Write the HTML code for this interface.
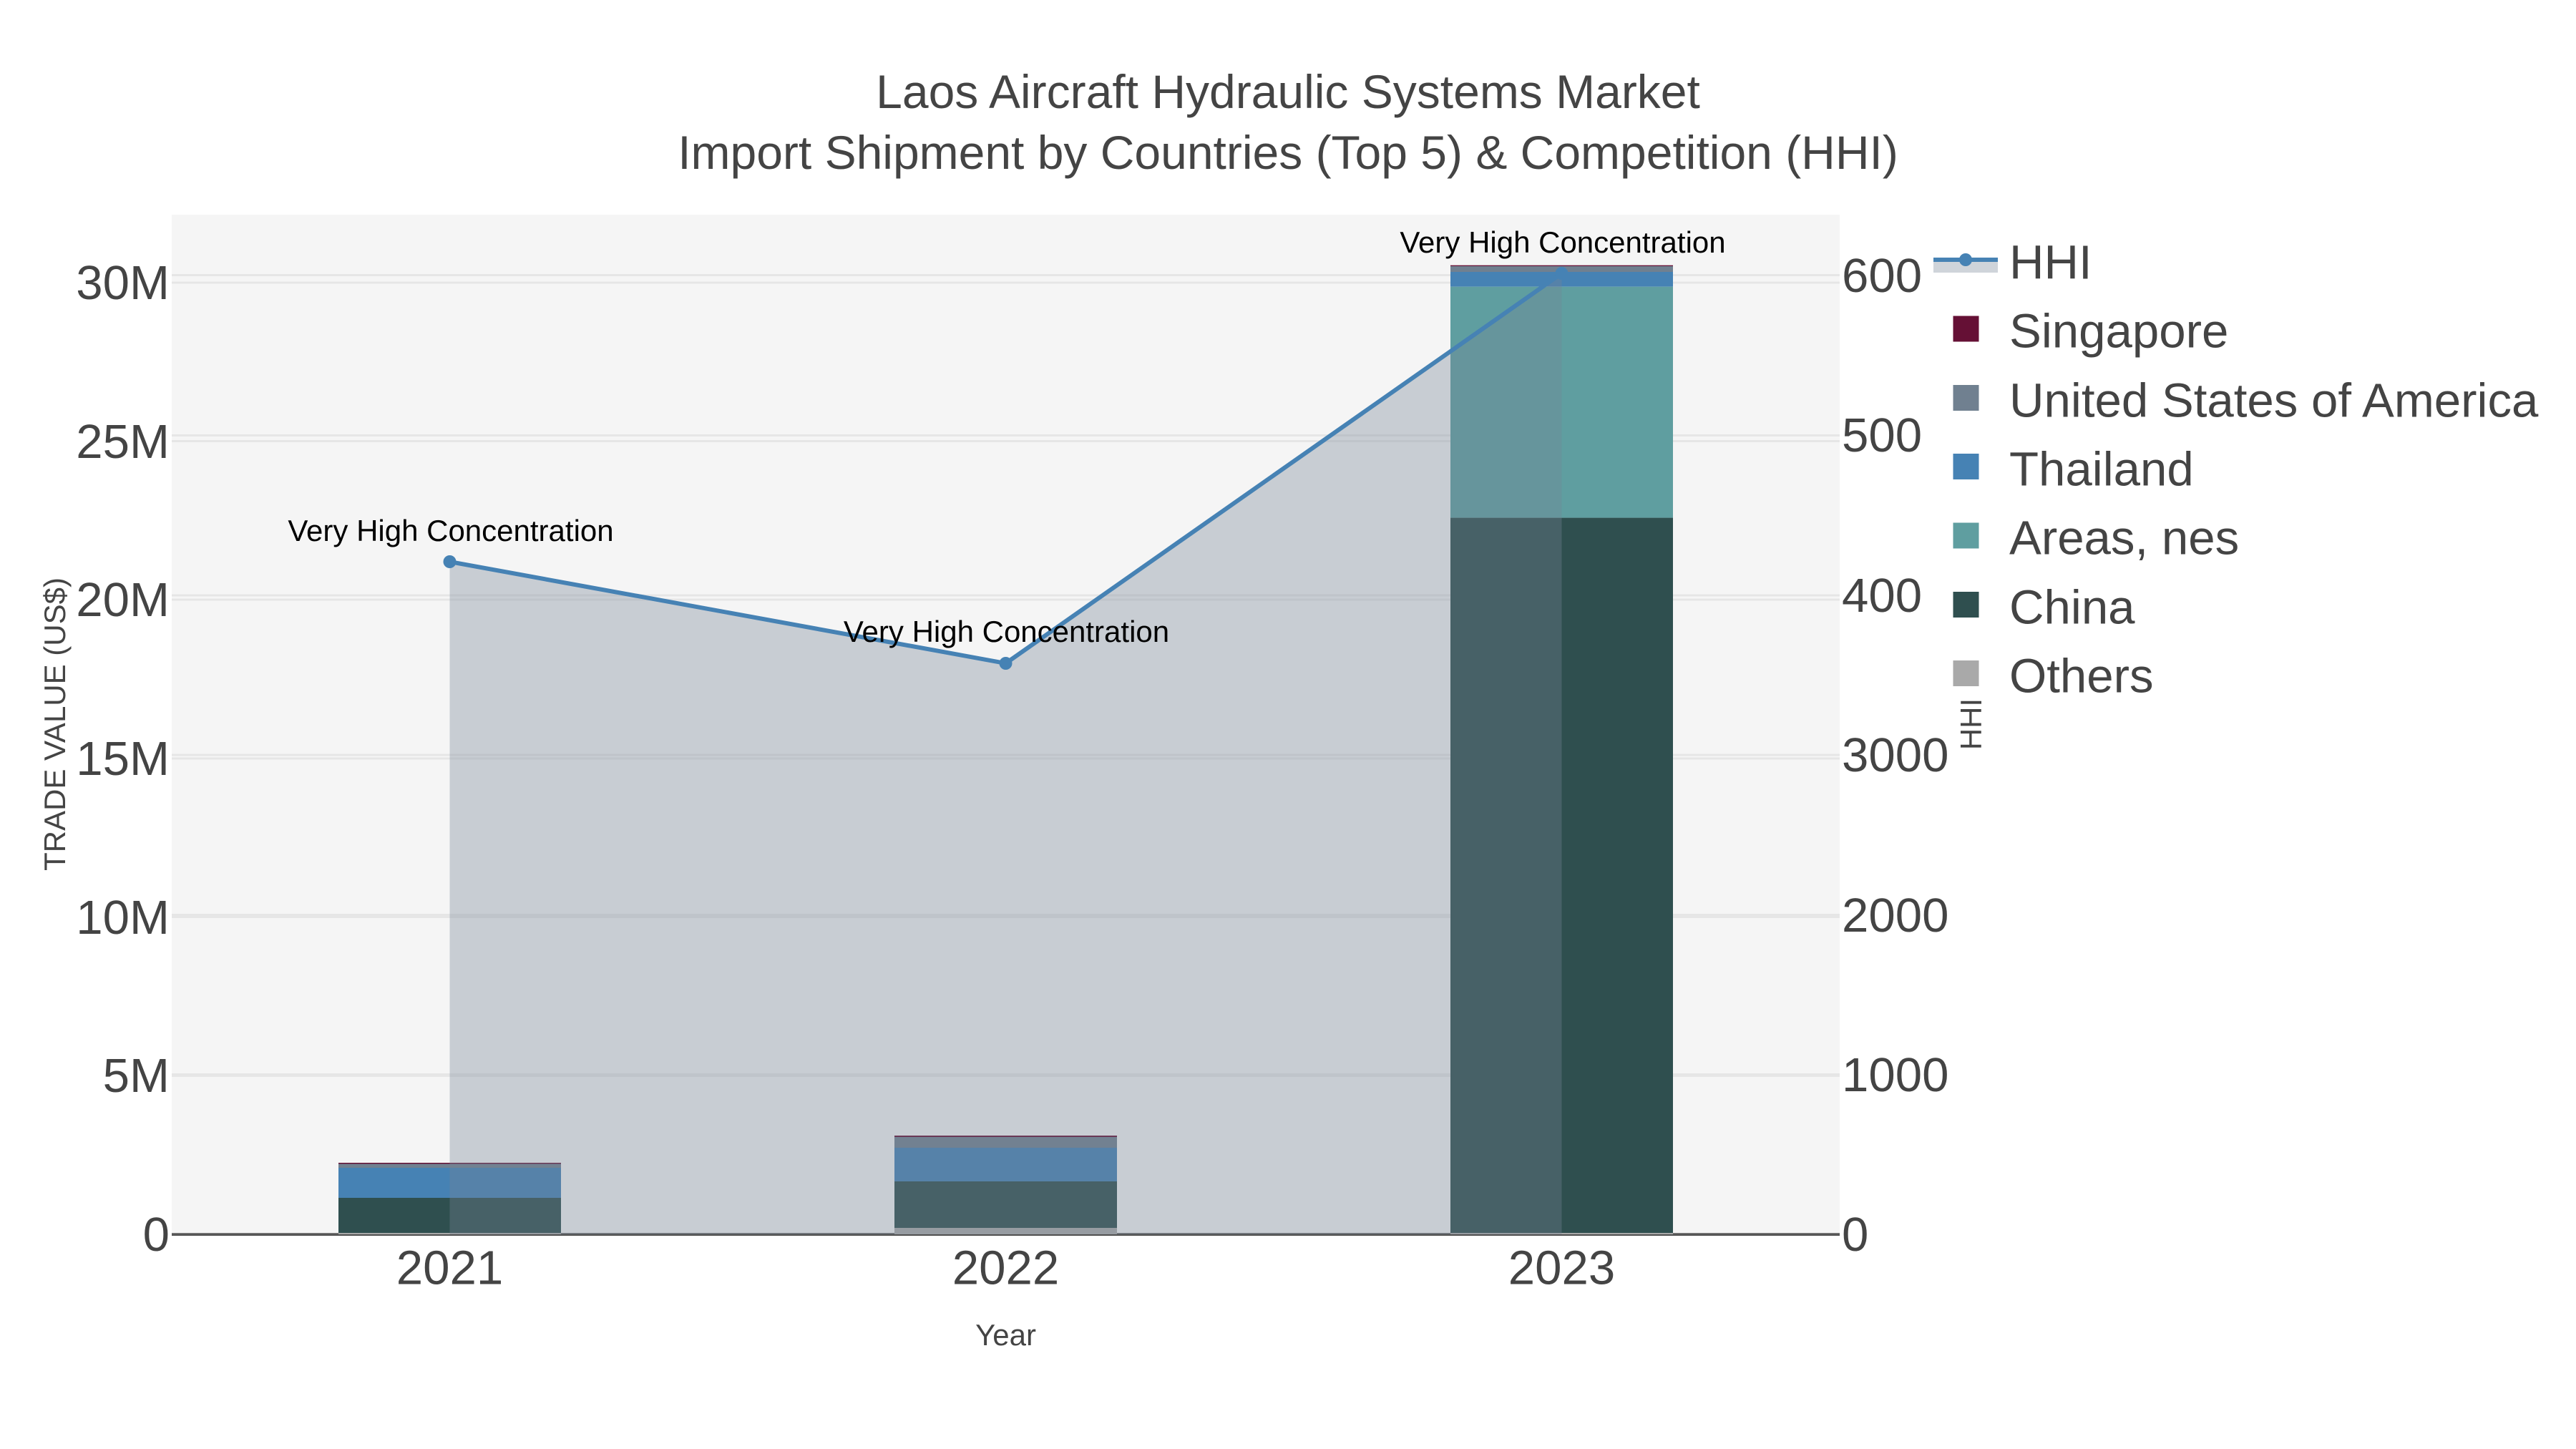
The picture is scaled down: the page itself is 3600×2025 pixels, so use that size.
<!DOCTYPE html>
<html><head><meta charset="utf-8"><style>
html,body{margin:0;padding:0;background:#fff;width:3600px;height:2025px;overflow:hidden}
svg{display:block}
text{font-family:"Liberation Sans",sans-serif;fill:#444}
.title{font-size:66px}
.t{font-size:67.2px}
.a{font-size:42px;fill:#000;text-anchor:middle}
.x{font-size:42px;text-anchor:middle}
.e{text-anchor:end}
.m{text-anchor:middle}
</style></head><body>
<svg width="3600" height="2025" viewBox="0 0 3600 2025" xmlns="http://www.w3.org/2000/svg">
<rect x="240" y="300" width="2331" height="1427" fill="#f5f5f5"/>
<g fill="#e6e6e6">
<rect x="240" y="393.5" width="2331" height="3"/>
<rect x="240" y="615" width="2331" height="3"/>
<rect x="240" y="836.5" width="2331" height="3"/>
<rect x="240" y="1058.5" width="2331" height="3"/>
<rect x="240" y="1280" width="2331" height="3"/>
<rect x="240" y="1502" width="2331" height="3"/>
<rect x="240" y="383" width="2331" height="3"/>
<rect x="240" y="607" width="2331" height="3"/>
<rect x="240" y="830.5" width="2331" height="3"/>
<rect x="240" y="1053.5" width="2331" height="3"/>
<rect x="240" y="1277" width="2331" height="3"/>
<rect x="240" y="1500" width="2331" height="3"/>
</g>
<rect x="240" y="1723" width="2331" height="1.5" fill="#777"/>
<rect x="240" y="1724.5" width="2331" height="2.5" fill="#505050"/>
<!-- 2021 bar -->
<rect x="473" y="1625" width="311" height="1.5" fill="#651035"/>
<rect x="473" y="1626.5" width="311" height="5.5" fill="#708090"/>
<rect x="473" y="1632" width="311" height="42" fill="#4682b4"/>
<rect x="473" y="1674" width="311" height="49" fill="#2f4f4f"/>
<rect x="473" y="1723" width="311" height="2" fill="#a9a9a9"/>
<!-- 2022 bar -->
<rect x="1250" y="1587" width="311" height="2" fill="#651035"/>
<rect x="1250" y="1589" width="311" height="15" fill="#708090"/>
<rect x="1250" y="1604" width="311" height="47" fill="#4682b4"/>
<rect x="1250" y="1651" width="311" height="65" fill="#2f4f4f"/>
<rect x="1250" y="1716" width="311" height="9" fill="#a9a9a9"/>
<!-- 2023 bar -->
<rect x="2027" y="370.7" width="311" height="1.3" fill="#651035"/>
<rect x="2027" y="372" width="311" height="8" fill="#708090"/>
<rect x="2027" y="380" width="311" height="20.7" fill="#4682b4"/>
<rect x="2027" y="400.7" width="311" height="322.9" fill="#5f9ea0"/>
<rect x="2027" y="723.6" width="311" height="999.4" fill="#2f4f4f"/>
<rect x="2027" y="1723" width="311" height="2" fill="#a9a9a9"/>
<!-- area -->
<polygon points="628.5,1725 628.5,785 1405.5,927 2182.5,382 2182.5,1725" fill="rgb(118,132,148)" fill-opacity="0.35"/>
<polyline points="628.5,785 1405.5,927 2182.5,382" fill="none" stroke="#4682b4" stroke-width="6" stroke-linejoin="round"/>
<circle cx="628.5" cy="785" r="9" fill="#4682b4"/>
<circle cx="1405.5" cy="927" r="9" fill="#4682b4"/>
<circle cx="2182.5" cy="382" r="9" fill="#4682b4"/>
<!-- annotations -->
<text class="a" x="630" y="756">Very High Concentration</text>
<text class="a" x="1406.5" y="897">Very High Concentration</text>
<text class="a" x="2184" y="353">Very High Concentration</text>
<!-- title -->
<text class="title m" x="1800" y="151">Laos Aircraft Hydraulic Systems Market</text>
<text class="title m" x="1800" y="236">Import Shipment by Countries (Top 5) &amp; Competition (HHI)</text>
<!-- left ticks -->
<text class="t e" x="237" y="418">30M</text>
<text class="t e" x="237" y="640">25M</text>
<text class="t e" x="237" y="861">20M</text>
<text class="t e" x="237" y="1083">15M</text>
<text class="t e" x="237" y="1305">10M</text>
<text class="t e" x="237" y="1526">5M</text>
<text class="t e" x="237" y="1748">0</text>
<!-- right ticks -->
<text class="t" x="2574" y="408">600</text>
<text class="t" x="2574" y="631">500</text>
<text class="t" x="2574" y="855">400</text>
<text class="t" x="2574" y="1078">3000</text>
<text class="t" x="2574" y="1302">2000</text>
<text class="t" x="2574" y="1525">1000</text>
<text class="t" x="2574" y="1748">0</text>
<!-- x ticks -->
<text class="t m" x="628.5" y="1794.5">2021</text>
<text class="t m" x="1405.5" y="1794.5">2022</text>
<text class="t m" x="2182.5" y="1794.5">2023</text>
<!-- axis titles -->
<text class="x" x="1405.5" y="1880">Year</text>
<text class="x" transform="translate(91,1012) rotate(-90)">TRADE VALUE (US$)</text>
<text class="x" transform="translate(2769,1012) rotate(-90)">HHI</text>
<!-- legend -->
<rect x="2702" y="363" width="90" height="18" fill="rgb(118,132,148)" fill-opacity="0.35"/>
<rect x="2702" y="360" width="90" height="6" fill="#4682b4"/>
<circle cx="2747" cy="363" r="9" fill="#4682b4"/>
<rect x="2729.5" y="441.5" width="36" height="36" fill="#651035"/>
<rect x="2729.5" y="538" width="36" height="36" fill="#708090"/>
<rect x="2729.5" y="634" width="36" height="36" fill="#4682b4"/>
<rect x="2729.5" y="730.5" width="36" height="36" fill="#5f9ea0"/>
<rect x="2729.5" y="827" width="36" height="36" fill="#2f4f4f"/>
<rect x="2729.5" y="923" width="36" height="36" fill="#a9a9a9"/>
<text class="t" x="2808" y="389.5">HHI</text>
<text class="t" x="2808" y="485.5">Singapore</text>
<text class="t" x="2808" y="582.5">United States of America</text>
<text class="t" x="2808" y="678.5">Thailand</text>
<text class="t" x="2808" y="774.5">Areas, nes</text>
<text class="t" x="2808" y="871.5">China</text>
<text class="t" x="2808" y="967.5">Others</text>
</svg>
</body></html>
